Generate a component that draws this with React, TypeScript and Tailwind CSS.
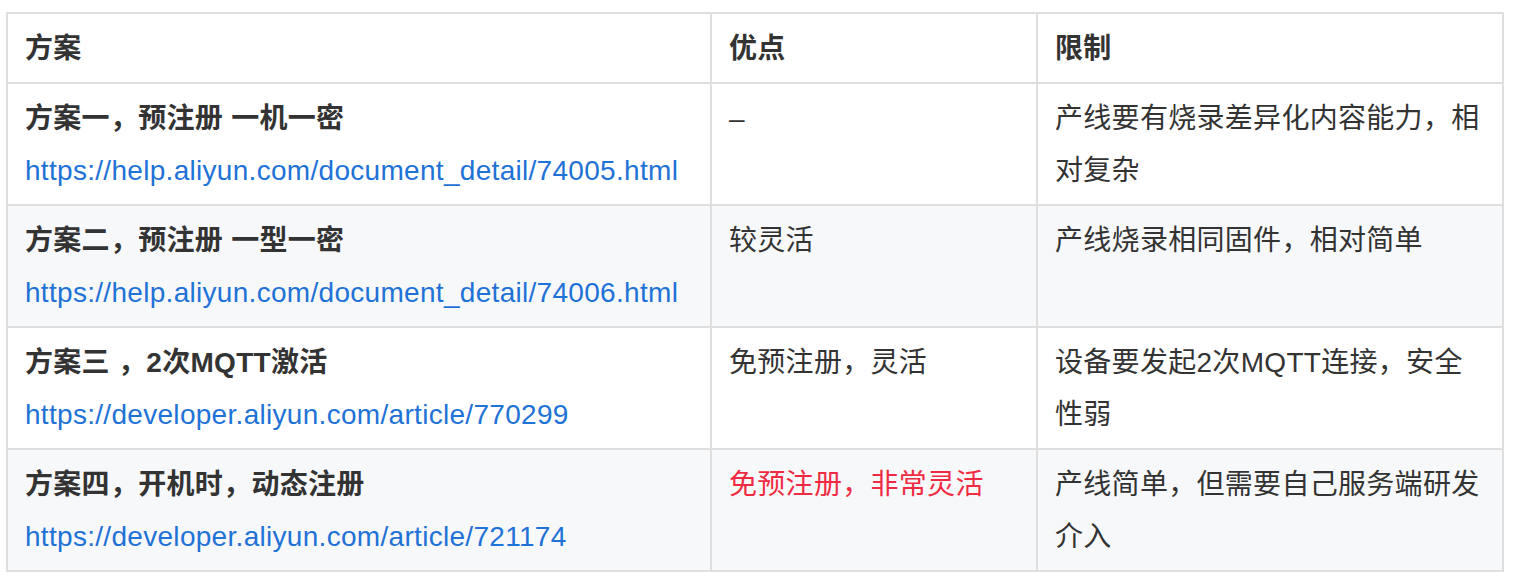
const rows = [
  {
    title: "方案一，预注册 一机一密",
    link: "https://help.aliyun.com/document_detail/74005.html",
    pro: "–",
    con: "产线要有烧录差异化内容能力，相对复杂",
  },
  {
    title: "方案二，预注册 一型一密",
    link: "https://help.aliyun.com/document_detail/74006.html",
    pro: "较灵活",
    con: "产线烧录相同固件，相对简单",
  },
  {
    title: "方案三 ，2次MQTT激活",
    link: "https://developer.aliyun.com/article/770299",
    pro: "免预注册，灵活",
    con: "设备要发起2次MQTT连接，安全性弱",
  },
  {
    title: "方案四，开机时，动态注册",
    link: "https://developer.aliyun.com/article/721174",
    pro: "免预注册，非常灵活",
    con: "产线简单，但需要自己服务端研发介入",
    highlight: true,
  },
];

const cell = "border-2 border-[#dfdfdf] px-[17px] pt-[9px] pb-[7px] align-top";

export default function App() {
  return (
    <div className="min-h-screen bg-white pl-[6px] pt-[12px] font-['Liberation_Sans','Noto_Sans_CJK_SC',sans-serif] text-[28px] leading-[52px] tracking-[0.3px] text-[#333]">
      <table className="w-[1496px] table-fixed border-collapse">
        <colgroup>
          <col className="w-[704px]" />
          <col className="w-[326px]" />
          <col className="w-[466px]" />
        </colgroup>
        <thead>
          <tr className="bg-white">
            <th className={`${cell} text-left font-bold`}>方案</th>
            <th className={`${cell} text-left font-bold`}>优点</th>
            <th className={`${cell} text-left font-bold`}>限制</th>
          </tr>
        </thead>
        <tbody>
          {rows.map((r, i) => (
            <tr key={r.link} className={i % 2 === 1 ? "bg-[#f7f8fa]" : "bg-white"}>
              <td className={cell}>
                <div className="font-bold">{r.title}</div>
                <a href={r.link} className="block text-[#1f72d6]">
                  {r.link}
                </a>
              </td>
              <td className={`${cell} ${r.highlight ? "text-[#ef2b43]" : ""}`}>{r.pro}</td>
              <td className={cell}>{r.con}</td>
            </tr>
          ))}
        </tbody>
      </table>
    </div>
  );
}
